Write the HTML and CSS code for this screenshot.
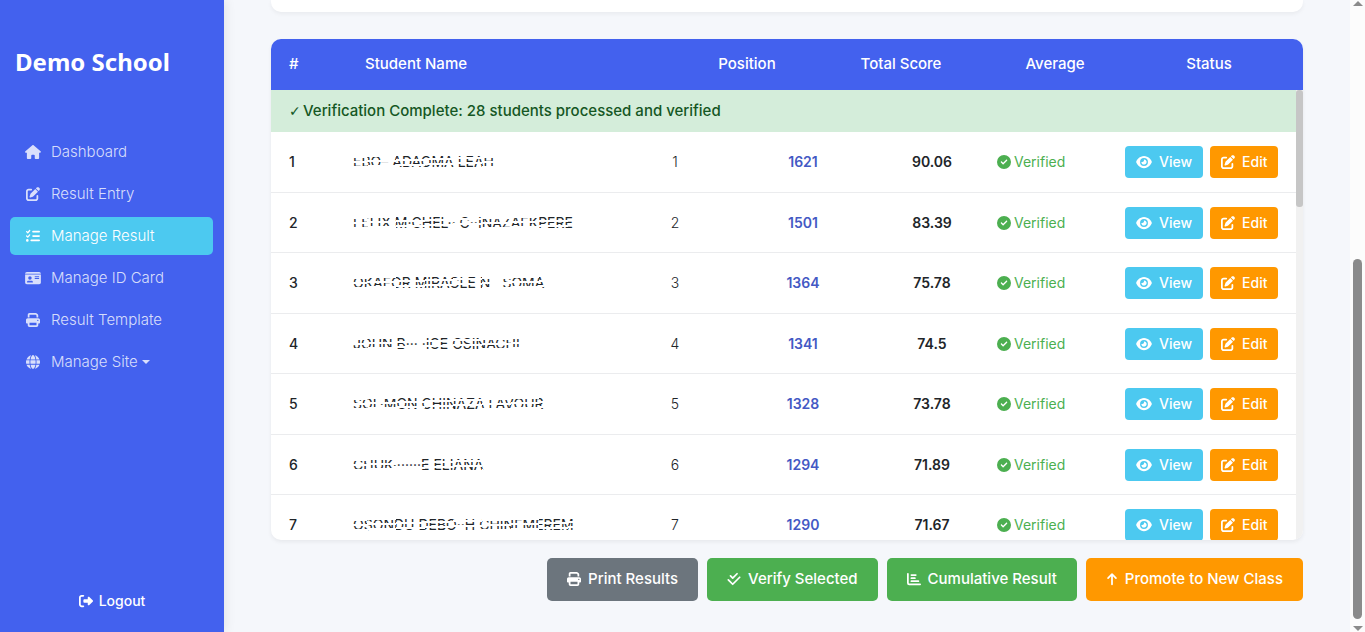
FILE: index.html
```html
<!DOCTYPE html>
<html lang="en">
<head>
<meta charset="utf-8">
<meta name="viewport" content="width=device-width, initial-scale=1">
<title>Demo School - Manage Result</title>
<link rel="stylesheet" href="styles.css">
</head>
<body>
<svg class="sprite" aria-hidden="true">
  <symbol id="home" viewBox="0 0 576 512"><path d="M575.8 255.5c0 18-15 32.1-32 32.1h-32l.7 160.2c0 2.7-.2 5.4-.5 8.1V472c0 22.1-17.9 40-40 40H456c-1.1 0-2.2 0-3.3-.1c-1.4 .1-2.8 .1-4.2 .1H416 392c-22.1 0-40-17.9-40-40V448 384c0-17.7-14.3-32-32-32H256c-17.7 0-32 14.3-32 32v64 24c0 22.1-17.9 40-40 40H160 128.1c-1.5 0-3-.1-4.5-.2c-1.2 .1-2.4 .2-3.6 .2H104c-22.1 0-40-17.9-40-40V360c0-.9 0-1.9 .1-2.8V287.6H32c-18 0-32-14-32-32.1c0-9 3-17 10-24L266.4 8c7-7 15-8 22-8s15 2 21 7L564.8 231.5c8 7 12 15 11 24z"/></symbol>
  <symbol id="edit" viewBox="0 0 512 512"><path d="M471.6 21.7c-21.9-21.9-57.3-21.9-79.2 0L362.3 51.7l97.9 97.9 30.1-30.1c21.9-21.9 21.9-57.3 0-79.2L471.6 21.7zm-299.2 220c-6.1 6.1-10.8 13.6-13.5 21.9l-29.6 88.8c-2.9 8.6-.6 18.1 5.8 24.6s15.9 8.7 24.6 5.8l88.8-29.6c8.2-2.7 15.7-7.4 21.9-13.5L437.7 172.3 339.7 74.3 172.4 241.7zM96 64C43 64 0 107 0 160V416c0 53 43 96 96 96H352c53 0 96-43 96-96V320c0-17.7-14.3-32-32-32s-32 14.3-32 32v96c0 17.7-14.3 32-32 32H96c-17.7 0-32-14.3-32-32V160c0-17.7 14.3-32 32-32h96c17.7 0 32-14.3 32-32s-14.3-32-32-32H96z"/></symbol>
  <symbol id="tasks" viewBox="0 0 512 512"><path d="M152.1 38.2c9.9 8.9 10.7 24 1.8 33.9l-72 80c-4.4 4.9-10.6 7.8-17.2 7.9s-12.9-2.4-17.6-7L7 113C-2.3 103.6-2.3 88.4 7 79s24.6-9.4 33.9 0l22.1 22.1 55.1-61.2c8.9-9.9 24-10.7 33.9-1.8zm0 160c9.9 8.9 10.7 24 1.8 33.9l-72 80c-4.4 4.9-10.6 7.8-17.2 7.9s-12.9-2.4-17.6-7L7 273c-9.4-9.4-9.4-24.6 0-33.9s24.6-9.4 33.9 0l22.1 22.1 55.1-61.2c8.9-9.9 24-10.7 33.9-1.8zM224 96c0-17.7 14.3-32 32-32H480c17.7 0 32 14.3 32 32s-14.3 32-32 32H256c-17.7 0-32-14.3-32-32zm0 160c0-17.7 14.3-32 32-32H480c17.7 0 32 14.3 32 32s-14.3 32-32 32H256c-17.7 0-32-14.3-32-32zM160 416c0-17.7 14.3-32 32-32H480c17.7 0 32 14.3 32 32s-14.3 32-32 32H192c-17.7 0-32-14.3-32-32zM48 368a48 48 0 1 1 0 96 48 48 0 1 1 0-96z"/></symbol>
  <symbol id="card" viewBox="0 0 576 512"><path fill-rule="evenodd" d="M0 96h576c0-35.300-28.700-64-64-64H64C28.700 32 0 60.700 0 96zm0 32V416c0 35.300 28.700 64 64 64H512c35.300 0 64-28.700 64-64V128H0zM64 405.300c0-29.500 23.900-53.300 53.300-53.300H234.700c29.500 0 53.300 23.900 53.300 53.300c0 5.900-4.800 10.700-10.700 10.700H74.700c-5.900 0-10.700-4.800-10.700-10.700zM176 192a64 64 0 1 1 0 128 64 64 0 1 1 0-128zM352 192H512v32H352zM352 256H512v32H352z"/></symbol>
  <symbol id="print" viewBox="0 0 512 512"><path d="M128 0C92.7 0 64 28.7 64 64v96h64V64H354.7L384 93.3V160h64V93.3c0-17-6.7-33.3-18.7-45.3L400 18.7C388 6.7 371.7 0 354.700 0H128zM384 352v32 64H128V384 368 352H384zm64 32h32c17.700 0 32-14.300 32-32V256c0-35.300-28.700-64-64-64H64c-35.300 0-64 28.700-64 64v96c0 17.700 14.300 32 32 32H64v64c0 35.300 28.700 64 64 64H384c35.300 0 64-28.700 64-64V384zM432 248a24 24 0 1 1 0 48 24 24 0 1 1 0-48z"/></symbol>
  <symbol id="globe" viewBox="0 0 512 512"><path d="M352 256c0 22.2-1.2 43.6-3.3 64H163.3c-2.2-20.4-3.3-41.8-3.3-64s1.2-43.6 3.3-64H348.7c2.2 20.4 3.3 41.8 3.3 64zm28.8-64H503.9c5.3 20.5 8.1 41.9 8.1 64s-2.8 43.5-8.1 64H380.8c2.1-20.6 3.2-42 3.2-64s-1.1-43.4-3.2-64zm112.6-32H376.7c-10-63.9-29.8-117.4-55.3-151.6c78.3 20.7 142 77.5 171.9 151.6zm-149.1 0H167.7c6.1-36.4 15.5-68.6 27-94.7c10.5-23.6 22.2-40.7 33.5-51.5C239.4 3.2 248.7 0 256 0s16.6 3.2 27.8 13.8c11.3 10.8 23 27.9 33.5 51.5c11.6 26 20.9 58.2 27 94.7zm-209 0H18.6C48.6 85.9 112.2 29.1 190.6 8.4C165.1 42.6 145.3 96.1 135.3 160zM8.1 192H131.2c-2.1 20.6-3.2 42-3.2 64s1.1 43.4 3.2 64H8.1C2.8 299.5 0 278.1 0 256s2.8-43.5 8.1-64zM194.7 446.6c-11.6-26-20.9-58.2-27-94.6H344.3c-6.1 36.4-15.5 68.6-27 94.6c-10.5 23.6-22.2 40.7-33.5 51.5C272.6 508.8 263.3 512 256 512s-16.6-3.2-27.8-13.8c-11.3-10.8-23-27.9-33.5-51.5zM135.3 352c10 63.9 29.8 117.4 55.3 151.6C112.2 482.9 48.6 426.1 18.6 352H135.3zm358.1 0c-30 74.1-93.6 130.9-171.9 151.6c25.5-34.2 45.2-87.7 55.3-151.6H493.4z"/></symbol>
  <symbol id="exit" viewBox="0 0 512 512"><path d="M377.9 105.9L500.7 228.7c7.2 7.2 11.3 17.1 11.3 27.3s-4.1 20.1-11.3 27.3L377.9 406.1c-6.4 6.4-15 9.9-24 9.9c-18.7 0-33.9-15.2-33.9-33.9l0-62.1-128 0c-17.7 0-32-14.3-32-32l0-64c0-17.7 14.3-32 32-32l128 0 0-62.1c0-18.7 15.2-33.9 33.9-33.9c9 0 17.6 3.6 24 9.9zM160 96L96 96c-17.7 0-32 14.3-32 32l0 256c0 17.7 14.3 32 32 32l64 0c17.7 0 32 14.3 32 32s-14.3 32-32 32l-64 0c-53 0-96-43-96-96L0 128C0 75 43 32 96 32l64 0c17.7 0 32 14.3 32 32s-14.3 32-32 32z"/></symbol>
  <symbol id="ok" viewBox="0 0 512 512"><path d="M256 512A256 256 0 1 0 256 0a256 256 0 1 0 0 512zM369 209L241 337c-9.4 9.4-24.6 9.4-33.9 0l-64-64c-9.400-9.400-9.400-24.600 0-33.900s24.600-9.400 33.900 0l47 47L335 175c9.400-9.400 24.600-9.400 33.900 0s9.400 24.600 0 33.900z"/></symbol>
  <symbol id="eye" viewBox="0 0 576 512"><path d="M288 32c-80.8 0-145.5 36.8-192.6 80.6C48.6 156 17.3 208 2.5 243.7c-3.3 7.9-3.3 16.7 0 24.6C17.3 304 48.6 356 95.4 399.4C142.5 443.2 207.2 480 288 480s145.5-36.8 192.6-80.6c46.8-43.5 78.1-95.4 93-131.1c3.3-7.9 3.3-16.7 0-24.6c-14.9-35.7-46.2-87.7-93-131.1C433.5 68.8 368.8 32 288 32zM144 256a144 144 0 1 1 288 0 144 144 0 1 1 -288 0zm144-64c0 35.3-28.7 64-64 64c-7.1 0-13.9-1.2-20.3-3.3c-5.500-1.800-11.900 1.600-11.700 7.400c.3 6.900 1.300 13.800 3.200 20.700c13.700 51.200 66.400 81.600 117.600 67.900s81.600-66.400 67.900-117.600c-11.100-41.500-47.800-69.400-88.600-71.100c-5.800-.2-9.200 6.100-7.400 11.700c2.100 6.400 3.300 13.200 3.300 20.300z"/></symbol>
  <symbol id="checks" viewBox="0 0 16 16"><path d="M4 4.500l2.500 2.500L11.500 2M1.500 9l5 5L14.500 6" fill="none" stroke="currentColor" stroke-width="2" stroke-linecap="round" stroke-linejoin="round"/></symbol>
  <symbol id="chart" viewBox="0 0 16 16"><path d="M1 2v10.500Q1 14 2.500 14H15M5 3.500h5M5 7h4M5 10.500h8" fill="none" stroke="currentColor" stroke-width="2" stroke-linecap="round"/></symbol>
  <symbol id="up" viewBox="0 0 12 16"><path d="M6 14V2.500M1.500 7L6 2.500 10.500 7" fill="none" stroke="currentColor" stroke-width="2" stroke-linecap="round" stroke-linejoin="round"/></symbol>
</svg>
<div class="app">
  <aside class="sidebar">
    <h1 class="brand">Demo School</h1>
    <nav class="menu">
      <a class="menu-item" href="#"><svg class="icon wide"><use href="#home"/></svg>Dashboard</a>
      <a class="menu-item" href="#"><svg class="icon wide"><use href="#edit"/></svg>Result Entry</a>
      <a class="menu-item active" href="#" aria-current="page"><svg class="icon wide"><use href="#tasks"/></svg>Manage Result</a>
      <a class="menu-item" href="#"><svg class="icon wide"><use href="#card"/></svg>Manage ID Card</a>
      <a class="menu-item" href="#"><svg class="icon wide"><use href="#print"/></svg>Result Template</a>
      <a class="menu-item" href="#"><svg class="icon wide"><use href="#globe"/></svg><span>Manage Site<i class="caret"></i></span></a>
    </nav>
    <a class="logout" href="#"><svg class="icon"><use href="#exit"/></svg>Logout</a>
  </aside>
  <main class="main">
    <section class="filters"></section>
    <section class="results">
      <table class="head-table">
        <thead><tr><th class="h-num">#</th><th class="h-name">Student Name</th><th class="h-col">Position</th><th class="h-col">Total Score</th><th class="h-col">Average</th><th class="h-col">Status</th></tr></thead>
      </table>
      <div class="scroll-area">
        <table class="body-table">
          <colgroup><col class="c-num"><col><col class="c-mid"><col class="c-mid"><col class="c-avg"><col class="c-status"><col class="c-act"></colgroup>
          <tbody>
            <tr class="notice"><td colspan="7"><span class="tick">✓</span>Verification Complete: 28 students processed and verified</td></tr>
            <tr><td class="num">1</td><td><span class="name">EBO– ADAOMA LEAH</span></td><td class="mid">1</td><td class="score">1621</td><td class="avg">90.06</td><td class="ok"><span class="state"><svg class="icon"><use href="#ok"/></svg>Verified</span></td><td><div class="acts"><button class="btn view"><svg class="icon wide"><use href="#eye"/></svg>View</button><button class="btn edit"><svg class="icon"><use href="#edit"/></svg>Edit</button></div></td></tr>
            <tr><td class="num">2</td><td><span class="name">FELIX M·CHEL·· C··INAZAEKPERE</span></td><td class="mid">2</td><td class="score">1501</td><td class="avg">83.39</td><td class="ok"><span class="state"><svg class="icon"><use href="#ok"/></svg>Verified</span></td><td><div class="acts"><button class="btn view"><svg class="icon wide"><use href="#eye"/></svg>View</button><button class="btn edit"><svg class="icon"><use href="#edit"/></svg>Edit</button></div></td></tr>
            <tr><td class="num">3</td><td><span class="name">OKAFOR MIRACLE N···SOMA</span></td><td class="mid">3</td><td class="score">1364</td><td class="avg">75.78</td><td class="ok"><span class="state"><svg class="icon"><use href="#ok"/></svg>Verified</span></td><td><div class="acts"><button class="btn view"><svg class="icon wide"><use href="#eye"/></svg>View</button><button class="btn edit"><svg class="icon"><use href="#edit"/></svg>Edit</button></div></td></tr>
            <tr><td class="num">4</td><td><span class="name">JOHN B··· ·ICE OSINACHI</span></td><td class="mid">4</td><td class="score">1341</td><td class="avg">74.5</td><td class="ok"><span class="state"><svg class="icon"><use href="#ok"/></svg>Verified</span></td><td><div class="acts"><button class="btn view"><svg class="icon wide"><use href="#eye"/></svg>View</button><button class="btn edit"><svg class="icon"><use href="#edit"/></svg>Edit</button></div></td></tr>
            <tr><td class="num">5</td><td><span class="name">SOL·MON CHINAZA FAVOUR</span></td><td class="mid">5</td><td class="score">1328</td><td class="avg">73.78</td><td class="ok"><span class="state"><svg class="icon"><use href="#ok"/></svg>Verified</span></td><td><div class="acts"><button class="btn view"><svg class="icon wide"><use href="#eye"/></svg>View</button><button class="btn edit"><svg class="icon"><use href="#edit"/></svg>Edit</button></div></td></tr>
            <tr><td class="num">6</td><td><span class="name">CHUK·······E ELIANA</span></td><td class="mid">6</td><td class="score">1294</td><td class="avg">71.89</td><td class="ok"><span class="state"><svg class="icon"><use href="#ok"/></svg>Verified</span></td><td><div class="acts"><button class="btn view"><svg class="icon wide"><use href="#eye"/></svg>View</button><button class="btn edit"><svg class="icon"><use href="#edit"/></svg>Edit</button></div></td></tr>
            <tr><td class="num">7</td><td><span class="name">OSONDU DEBO··H CHINEMEREM</span></td><td class="mid">7</td><td class="score">1290</td><td class="avg">71.67</td><td class="ok"><span class="state"><svg class="icon"><use href="#ok"/></svg>Verified</span></td><td><div class="acts"><button class="btn view"><svg class="icon wide"><use href="#eye"/></svg>View</button><button class="btn edit"><svg class="icon"><use href="#edit"/></svg>Edit</button></div></td></tr>
          </tbody>
        </table>
        <div class="table-bar"><div class="table-thumb"></div></div>
      </div>
    </section>
    <div class="toolbar">
      <button class="btn big gray"><svg class="icon"><use href="#print"/></svg>Print Results</button>
      <button class="btn big green"><svg class="icon"><use href="#checks"/></svg>Verify Selected</button>
      <button class="btn big green"><svg class="icon"><use href="#chart"/></svg>Cumulative Result</button>
      <button class="btn big edit"><svg class="icon slim"><use href="#up"/></svg>Promote to New Class</button>
    </div>
  </main>
  <div class="page-bar"><i class="arrow arrow-up"></i><div class="page-thumb"></div><i class="arrow arrow-down"></i></div>
</div>
</body>
</html>
```
FILE: styles.css
```css
* { box-sizing: border-box; }
body { margin: 0; background: #f5f7fb; color: #212529; font: 400 14px/22px Inter, "Open Sans", sans-serif; }
.sprite { display: none; }
.icon { width: 14px; height: 14px; fill: currentColor; flex: none; }
.icon.wide { width: 16px; }
.icon.slim { width: 12px; }
.app { display: flex; height: 100vh; overflow: hidden; }

.sidebar { display: flex; flex-direction: column; flex: none; width: 224px; padding: 44px 10px 20px; background: #4361ee; color: #fff; box-shadow: 2px 0 10px rgba(0, 0, 0, .08); }
.brand { margin: 0 5px 53px; font: 700 24px/36px "Noto Sans", sans-serif; }
.menu { display: flex; flex-direction: column; gap: 4px; }
.menu-item { display: flex; align-items: center; gap: 10px; height: 38px; margin-right: 1px; padding: 0 15px; border-radius: 5px; color: rgba(255, 255, 255, .8); font-size: 15px; font-weight: 300; text-decoration: none; }
.menu-item.active { background: #4cc9f0; color: #fff; }
.caret { display: inline-block; margin-left: 4px; vertical-align: 3px; border: 4px solid transparent; border-top-color: currentColor; border-bottom: 0; }
.logout { display: flex; align-items: center; justify-content: center; gap: 6px; margin-top: auto; color: #fff; font-weight: 500; text-decoration: none; }

.main { flex: 1; min-width: 0; padding: 0 47px; }
.filters { height: 12px; border-radius: 0 0 10px 10px; background: #fff; box-shadow: 0 2px 4px rgba(0, 0, 0, .05); }
.results { margin-top: 27px; overflow: hidden; border-radius: 10px; background: #fff; box-shadow: 0 2px 4px rgba(0, 0, 0, .06); }
table { border-collapse: separate; border-spacing: 0; table-layout: fixed; }
.head-table { width: 100%; padding-right: 17px; background: #4361ee; color: #fff; }
th { height: 51px; padding: 0 0 2px; font-size: 15px; font-weight: 500; text-align: center; }
.h-num { width: 76px; padding-left: 18px; text-align: left; }
.h-name { padding-left: 18px; text-align: left; }
.h-col { width: 154px; }

.scroll-area { display: flex; align-items: stretch; max-height: 450px; overflow: hidden; }
.body-table { flex: 1; width: 100%; }
.c-num { width: 64px; }
.c-mid { width: 128px; }
.c-avg { width: 130px; }
.c-status { width: 110px; }
.c-act { width: 189px; }
td { height: 60px; padding: 0 18px; border-bottom: 1px solid #ebecee; text-align: left; }
tr:nth-child(even) td { height: 61px; }
.notice td { height: 42px; background: #d4edda; border-color: #d4edda; color: #155724; font-size: 15px; font-weight: 500; }
.tick { display: inline-block; width: 14px; font-family: "DejaVu Sans", sans-serif; font-size: 14px; font-weight: 400; }
.num { font-weight: 500; }
.mid, .score, .avg { padding: 0; text-align: center; }
.score, .avg { font-weight: 600; }
.score { color: #4459c4; }
.mid { font-weight: 300; }
.ok { padding: 0; color: #4caf50; }
.state { display: flex; align-items: center; gap: 3px; }
.name { position: relative; font-weight: 400; white-space: nowrap; }
.name::after { content: ""; position: absolute; inset: 0; background: repeating-linear-gradient(178deg, transparent 0 3px, #fff 3px 5px); }
.acts { display: flex; gap: 7px; }
.btn { display: flex; align-items: center; justify-content: center; gap: 7px; height: 32px; padding: 0 11px; border: 0; border-radius: 4px; color: #fff; font: inherit; font-weight: 500; white-space: nowrap; }
.view { background: #4cc9f0; }
.edit { background: #ff9800; }
.green { background: #4caf50; }
.gray { background: #6c757d; }
.table-bar { flex: none; width: 7px; background: #f1f1f1; }
.table-thumb { height: 117px; border-radius: 3px; background: #c6c6c6; }

.toolbar { display: flex; justify-content: flex-end; gap: 9px; margin-top: 18px; }
.btn.big { height: 43px; padding: 0 20px 2px; border-radius: 5px; font-size: 15px; }

.page-bar { display: flex; flex-direction: column; align-items: center; justify-content: space-between; flex: none; width: 15px; background: #fcfcfc; }
.page-thumb { width: 9px; height: 57%; margin: auto 0 7px; border-radius: 5px; background: #8b8b8b; }
.arrow { border: 5px solid transparent; }
.arrow-up { border-bottom-color: #8b8b8b; border-top-width: 1px; }
.arrow-down { border-top-color: #8b8b8b; border-bottom-width: 1px; }
```
